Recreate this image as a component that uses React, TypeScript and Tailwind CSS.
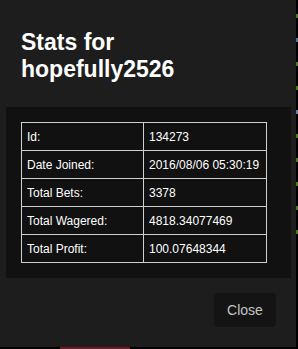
import React from 'react';

const rows: [string, string][] = [
  ['Id:', '134273'],
  ['Date Joined:', '2016/08/06 05:30:19'],
  ['Total Bets:', '3378'],
  ['Total Wagered:', '4818.34077469'],
  ['Total Profit:', '100.07648344'],
];

const App: React.FC = () => {
  return (
    <div
      className="w-[298px] h-[349px] bg-black flex flex-col overflow-hidden"
      style={{ fontFamily: '"Liberation Sans", Arial, sans-serif' }}
    >
      <div className="flex">
        {/* Modal */}
        <div className="w-[296px] h-[347px] bg-[#1d1d1d] flex flex-col">
          {/* Header */}
          <div className="pl-[21px] pt-[29px] h-[107px]">
            <h1 className="text-[23px] leading-[27px] font-bold text-white">
              Stats for
              <br />
              hopefully2526
            </h1>
          </div>

          {/* Body */}
          <div className="ml-[6px] mr-[5px] bg-[#111111] p-[15px]">
            <table className="w-[245px] table-fixed border-collapse text-[12px] text-white">
              <colgroup>
                <col className="w-[122px]" />
                <col className="w-[123px]" />
              </colgroup>
              <tbody>
                {rows.map(([label, value]) => (
                  <tr key={label} className="h-[28px]">
                    <td className="border border-[#d0d0d0] px-[5px] py-0 whitespace-nowrap">{label}</td>
                    <td className="border border-[#d0d0d0] px-[5px] py-0 whitespace-nowrap">{value}</td>
                  </tr>
                ))}
              </tbody>
            </table>
          </div>

          {/* Footer */}
          <div className="flex justify-end pt-[15px] pr-[20px]">
            <button className="w-[62px] h-[34px] rounded-[4px] bg-[#141414] text-[14px] text-[#c4c4c4]">
              Close
            </button>
          </div>
        </div>

        {/* Page behind, right edge */}
        <div className="w-[2px] flex flex-col gap-[20px] pt-[14px]">
          <span className="h-[4px] bg-[#4a7a1c]" />
          <span className="h-[4px] bg-[#5a7090]" />
          <span className="h-[4px] bg-[#4a7a1c]" />
          <span className="h-[4px] bg-[#4a7a1c]" />
          <span className="h-[4px] bg-[#7080a0]" />
          <span className="h-[4px] bg-[#4a7a1c]" />
          <span className="h-[4px] bg-[#4a7a1c]" />
          <span className="h-[4px] bg-[#4a7a1c]" />
          <span className="h-[4px] bg-[#4a7a1c]" />
          <span className="h-[4px] bg-[#4a7a1c]" />
        </div>
      </div>

      {/* Page behind, bottom edge */}
      <div className="h-[2px] flex pl-[60px]">
        <span className="w-[70px] h-[2px] bg-[#6b1a24]" />
      </div>
    </div>
  );
};

export default App;
